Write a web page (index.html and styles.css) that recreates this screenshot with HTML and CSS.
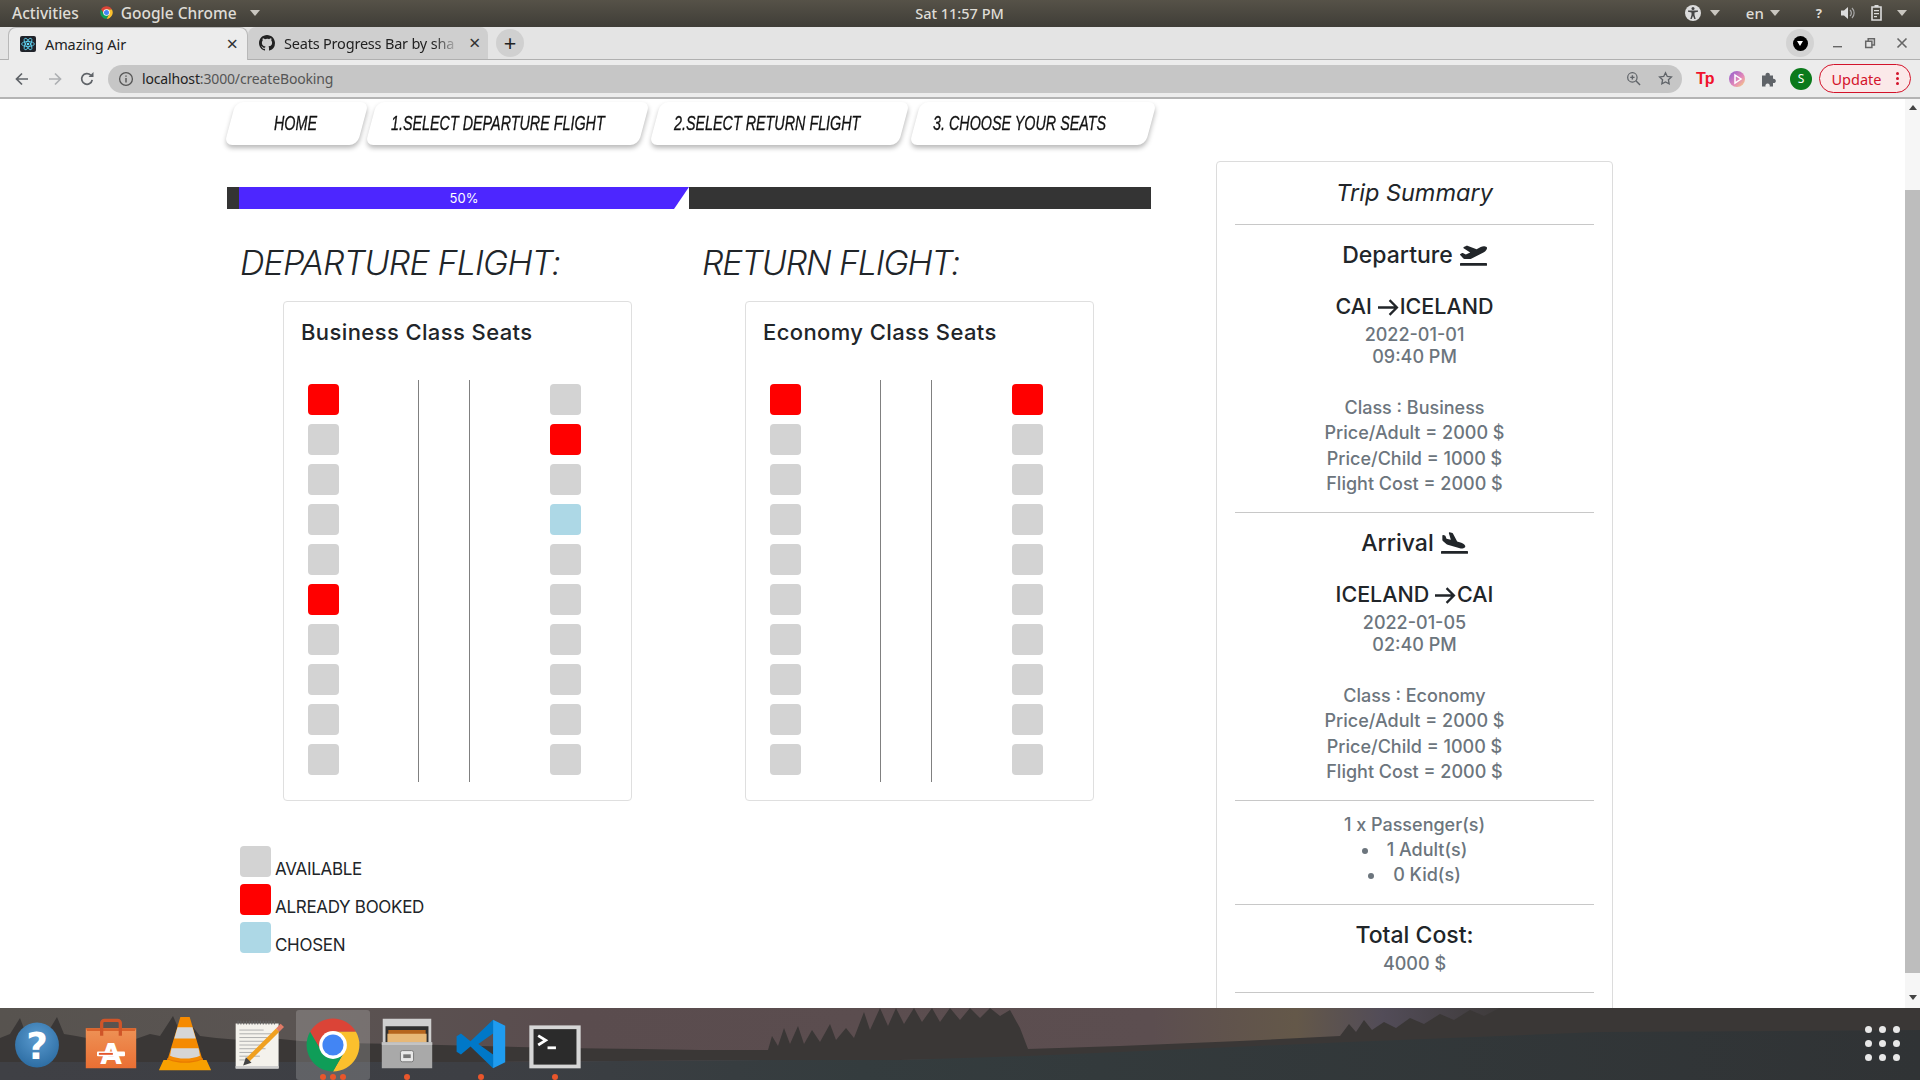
FILE: index.html
```html
<!DOCTYPE html>
<html lang="en">
<head>
<meta charset="utf-8">
<title>Amazing Air</title>
<link rel="stylesheet" href="styles.css">
</head>
<body>
<svg class="defs" width="0" height="0">
  <symbol id="chrome" viewBox="0 0 48 48">
    <path fill="#db4437" d="M6.68 14A20 20 0 0 1 41.32 14H24L15.34 29Z"/>
    <path fill="#fbc02d" d="M41.32 14A20 20 0 0 1 24 44L32.66 29 24 14Z"/>
    <path fill="#0f9d58" d="M24 44A20 20 0 0 1 6.68 14L15.34 29H32.66Z"/>
    <circle cx="24" cy="24" r="10.5" fill="#fff"/>
    <circle cx="24" cy="24" r="8" fill="#4285f4"/>
  </symbol>
  <symbol id="caret" viewBox="0 0 10 6"><path fill="currentColor" d="M0 0H10L5 6Z"/></symbol>
  <symbol id="takeoff" viewBox="0 0 640 512"><path fill="#212529" d="M624 448H16c-8.84 0-16 7.16-16 16v32c0 8.84 7.16 16 16 16h608c8.84 0 16-7.16 16-16v-32c0-8.84-7.16-16-16-16zM80.55 341.27c6.28 6.84 15.1 10.72 24.33 10.71l130.54-.18a65.62 65.62 0 0 0 29.64-7.12l290.96-147.65c26.74-13.57 50.71-32.94 67.02-58.31 18.31-28.48 20.3-49.09 13.07-63.65-7.21-14.57-24.74-25.27-58.25-27.45-29.85-1.94-59.54 5.92-86.28 19.48l-98.51 49.99-218.7-82.06a17.799 17.799 0 0 0-18-1.11L90.62 67.29c-10.67 5.41-13.25 19.65-5.17 28.53l156.22 98.1-103.21 52.38-72.35-36.47a17.804 17.804 0 0 0-16.07.02L9.91 230.22c-10.44 5.3-13.19 19.12-5.57 28.08l76.21 82.97z"/></symbol>
  <symbol id="landing" viewBox="0 0 640 512"><path fill="#212529" d="M624 448H16c-8.84 0-16 7.16-16 16v32c0 8.84 7.16 16 16 16h608c8.84 0 16-7.16 16-16v-32c0-8.84-7.16-16-16-16zM44.81 205.66l88.74 80a62.607 62.607 0 0 0 25.47 13.93l287.6 78.35c26.48 7.21 54.56 8.72 81 1.36 29.67-8.27 43.44-21.21 47.25-35.71 3.83-14.5-1.73-32.71-23.37-54.96-19.28-19.82-44.35-32.79-70.83-40l-97.51-26.56L282.8 30.22c-1.51-5.81-5.95-10.35-11.66-11.91L206.05.58c-10.56-2.88-20.9 5.32-20.71 16.44l47.92 164.21-102.2-27.84-27.59-67.88c-1.93-4.89-6.01-8.57-11.02-9.93L52.72 64.75c-10.34-2.82-20.53 5-20.72 15.88l.23 101.78c.19 8.91 6.03 17.34 12.58 23.25z"/></symbol>
</svg>

<header class="topbar">
  <div class="top-left">
    <span>Activities</span>
    <span class="top-app"><svg class="i15"><use href="#chrome"/></svg>Google Chrome<svg class="caret"><use href="#caret"/></svg></span>
  </div>
  <div class="clock">Sat 11:57 PM</div>
  <div class="top-right">
    <span class="tr-a11y">
      <svg class="i16" viewBox="0 0 16 16"><circle cx="8" cy="8" r="8" fill="#dcdcdc"/><circle cx="8" cy="3.6" r="1.5" fill="#444"/><path fill="#444" d="M3 5.4h10v1.3l-3.5.8v2.6l1.2 4h-1.4L8 10.8l-1.3 3.3H5.3l1.2-4V7.5L3 6.7Z"/></svg>
      <svg class="caret"><use href="#caret"/></svg>
    </span>
    <span class="tr-lang">en<svg class="caret"><use href="#caret"/></svg></span>
    <span class="tr-help">?</span>
    <svg class="i16 tr-sound" viewBox="0 0 16 16"><path fill="#dcdcdc" d="M1 5.5h3L8 2v12L4 10.5H1Z"/><path fill="none" stroke="#aaa" stroke-width="1.2" d="M10 5a4 4 0 0 1 0 6M12 3a7 7 0 0 1 0 10"/></svg>
    <svg class="i16 tr-batt" viewBox="0 0 16 18"><path fill="none" stroke="#dcdcdc" stroke-width="1.6" d="M3 3h9v13H3Z"/><path fill="#dcdcdc" d="M5.5 1h4v2h-4ZM5 6h5v1.3H5ZM5 9h5v1.3H5ZM5 12h3v1.3H5Z"/></svg>
    <svg class="caret tr-last"><use href="#caret"/></svg>
  </div>
</header>

<div class="tabstrip">
  <div class="tab tab-active">
    <svg class="favicon" viewBox="0 0 16 16"><rect width="16" height="16" rx="2" fill="#20232a"/><g fill="none" stroke="#61dafb" stroke-width=".8"><ellipse cx="8" cy="8" rx="6.4" ry="2.5"/><ellipse cx="8" cy="8" rx="6.4" ry="2.5" transform="rotate(60 8 8)"/><ellipse cx="8" cy="8" rx="6.4" ry="2.5" transform="rotate(120 8 8)"/></g><circle cx="8" cy="8" r="1.3" fill="#61dafb"/></svg>
    <span class="tab-title">Amazing Air</span>
    <span class="tab-x">×</span>
  </div>
  <div class="tab tab-idle">
    <svg class="favicon" viewBox="0 0 16 16"><path fill="#222" d="M8 0C3.58 0 0 3.58 0 8c0 3.54 2.29 6.53 5.47 7.59.4.07.55-.17.55-.38v-1.34c-2.23.48-2.7-1.07-2.7-1.07-.36-.92-.89-1.17-.89-1.17-.73-.5.05-.49.05-.49.8.06 1.23.83 1.23.83.71 1.22 1.87.87 2.33.66.07-.52.28-.87.5-1.07-1.78-.2-3.64-.89-3.64-3.95 0-.87.31-1.59.82-2.15-.08-.2-.36-1.02.08-2.12 0 0 .67-.21 2.2.82A7.6 7.6 0 0 1 8 3.87c.68 0 1.36.09 2 .27 1.53-1.04 2.2-.82 2.2-.82.44 1.1.16 1.92.08 2.12.51.56.82 1.27.82 2.15 0 3.07-1.87 3.75-3.65 3.95.29.25.54.73.54 1.48v2.2c0 .21.15.46.55.38A8 8 0 0 0 16 8c0-4.42-3.58-8-8-8Z"/></svg>
    <span class="tab-title tab-fade">Seats Progress Bar by sha</span>
    <span class="tab-x">×</span>
  </div>
  <div class="newtab">+</div>
  <div class="strip-right">
    <span class="profile-pill"><span class="profile-dot"></span></span>
    <svg class="win" viewBox="0 0 12 12"><path fill="#666" d="M1 9h9v1.4H1Z"/></svg>
    <svg class="win" viewBox="0 0 12 12"><path fill="none" stroke="#666" stroke-width="1.5" d="M1.7 4.2h6.2v6.2H1.7ZM4.2 4V1.7h6.2v6.2H8"/></svg>
    <svg class="win" viewBox="0 0 12 12"><path fill="none" stroke="#666" stroke-width="1.6" d="M1.5 1.5l9 9M10.5 1.5l-9 9"/></svg>
  </div>
</div>

<div class="toolbar">
  <svg class="nav-ic" viewBox="0 0 16 16"><path fill="none" stroke="#5f6368" stroke-width="1.7" d="M14 8H2.5M8 2.5 2.5 8 8 13.5"/></svg>
  <svg class="nav-ic" viewBox="0 0 16 16"><path fill="none" stroke="#aeb0b3" stroke-width="1.7" d="M2 8h11.5M8 2.5 13.5 8 8 13.5"/></svg>
  <svg class="nav-ic" viewBox="0 0 16 16"><path fill="none" stroke="#5f6368" stroke-width="1.7" d="M13.2 8.8A5.3 5.3 0 1 1 11.7 4.2"/><path fill="#5f6368" d="M9.5 6H14.5V1Z"/></svg>
  <div class="omnibox">
    <svg class="info" viewBox="0 0 16 16"><circle cx="8" cy="8" r="6.4" fill="none" stroke="#555" stroke-width="1.3"/><path fill="#555" d="M7.3 7h1.4v4.4H7.3ZM7.3 4.4h1.4v1.4H7.3Z"/></svg>
    <span class="url"><b>localhost</b>:3000/createBooking</span>
    <svg class="omni-ic omni-zoom" viewBox="0 0 16 16"><circle cx="6.8" cy="6.8" r="5" fill="none" stroke="#5f6368" stroke-width="1.3"/><path stroke="#5f6368" stroke-width="1.5" d="M10.5 10.5 15 15M4.5 6.8h4.6M6.8 4.5v4.6"/></svg>
    <svg class="omni-ic" viewBox="0 0 16 16"><path fill="none" stroke="#5f6368" stroke-width="1.4" d="M8 1.8l1.9 4 4.4.5-3.2 3 .8 4.4L8 11.6l-3.9 2.1.8-4.4-3.2-3 4.4-.5Z"/></svg>
  </div>
  <div class="ext-row">
    <span class="ext-tp">Tp</span>
    <svg class="ext" viewBox="0 0 16 16"><defs><linearGradient id="pg" x1="0" y1="0" x2="1" y2="1"><stop offset="0" stop-color="#8e5bd0"/><stop offset=".6" stop-color="#e58ab8"/><stop offset="1" stop-color="#f6d77c"/></linearGradient></defs><circle cx="8" cy="8" r="8" fill="url(#pg)"/><path fill="none" stroke="#fff" stroke-width="1.5" d="M6 4l6 4-6 4Z"/></svg>
    <svg class="ext" viewBox="0 0 16 16"><path fill="#5f6368" d="M1 4.500h3.600a2.200 2.200 0 1 1 4.200 0H12v3.300a2.200 2.200 0 1 1 0 4.200V15.500H8.600a2.200 2.200 0 1 0-4 0H1Z"/></svg>
    <span class="avatar">S</span>
    <span class="update">Update<span class="update-dots"><i></i><i></i><i></i></span></span>
  </div>
</div>

<div class="viewport">
  <div class="page">
    <main class="main">
      <nav class="steps">
        <a class="step step-home"><span>HOME</span></a>
        <a class="step step-dep"><span>1.SELECT DEPARTURE FLIGHT</span></a>
        <a class="step step-ret"><span>2.SELECT RETURN FLIGHT</span></a>
        <a class="step step-seat"><span>3. CHOOSE YOUR SEATS</span></a>
      </nav>
      <div class="progress"><div class="progress-fill">50%</div></div>

      <div class="flights">
        <section class="flight">
          <h2>DEPARTURE FLIGHT:</h2>
          <div class="card">
            <h3>Business Class Seats</h3>
            <div class="cabin">
              <div class="col">
                <i class="seat booked"></i><i class="seat"></i><i class="seat"></i><i class="seat"></i><i class="seat"></i>
                <i class="seat booked"></i><i class="seat"></i><i class="seat"></i><i class="seat"></i><i class="seat"></i>
              </div>
              <div class="aisle"></div>
              <div class="col">
                <i class="seat"></i><i class="seat booked"></i><i class="seat"></i><i class="seat chosen"></i><i class="seat"></i>
                <i class="seat"></i><i class="seat"></i><i class="seat"></i><i class="seat"></i><i class="seat"></i>
              </div>
            </div>
          </div>
        </section>
        <section class="flight">
          <h2 class="h2-return">RETURN FLIGHT:</h2>
          <div class="card">
            <h3>Economy Class Seats</h3>
            <div class="cabin">
              <div class="col">
                <i class="seat booked"></i><i class="seat"></i><i class="seat"></i><i class="seat"></i><i class="seat"></i>
                <i class="seat"></i><i class="seat"></i><i class="seat"></i><i class="seat"></i><i class="seat"></i>
              </div>
              <div class="aisle"></div>
              <div class="col">
                <i class="seat booked"></i><i class="seat"></i><i class="seat"></i><i class="seat"></i><i class="seat"></i>
                <i class="seat"></i><i class="seat"></i><i class="seat"></i><i class="seat"></i><i class="seat"></i>
              </div>
            </div>
          </div>
        </section>
      </div>

      <ul class="legend">
        <li><i class="seat"></i><span>AVAILABLE</span></li>
        <li><i class="seat booked"></i><span>ALREADY BOOKED</span></li>
        <li><i class="seat chosen"></i><span>CHOSEN</span></li>
      </ul>
    </main>

    <aside class="summary">
      <div class="sum-head">Trip Summary</div>
      <section class="sum-sec">
        <h4>Departure <svg class="plane"><use href="#takeoff"/></svg></h4>
        <div class="route">CAI <span class="arrow"><svg viewBox="0 0 20 16"><path fill="none" stroke="#212529" stroke-width="2.200" d="M0 8h18M11 1l7 7-7 7"/></svg></span>ICELAND</div>
        <div class="when">2022-01-01<br>09:40 PM</div>
        <div class="fare">Class : Business<br>Price/Adult = 2000 $<br>Price/Child = 1000 $<br>Flight Cost = 2000 $</div>
      </section>
      <section class="sum-sec">
        <h4>Arrival <svg class="plane"><use href="#landing"/></svg></h4>
        <div class="route">ICELAND <span class="arrow"><svg viewBox="0 0 20 16"><path fill="none" stroke="#212529" stroke-width="2.200" d="M0 8h18M11 1l7 7-7 7"/></svg></span>CAI</div>
        <div class="when">2022-01-05<br>02:40 PM</div>
        <div class="fare">Class : Economy<br>Price/Adult = 2000 $<br>Price/Child = 1000 $<br>Flight Cost = 2000 $</div>
      </section>
      <section class="sum-pax">
        <div>1 x Passenger(s)</div>
        <ul>
          <li>1 Adult(s)</li>
          <li>0 Kid(s)</li>
        </ul>
      </section>
      <section class="sum-total">
        <h5>Total Cost:</h5>
        <div>4000 $</div>
      </section>
    </aside>
  </div>
  <div class="scrollbar">
    <span class="sb-up"></span>
    <span class="sb-thumb"></span>
    <span class="sb-down"></span>
  </div>
</div>

<footer class="dock">
  <svg class="wallpaper" viewBox="0 0 1920 72" preserveAspectRatio="none">
    <defs>
      <linearGradient id="sky" x1="0" x2="1" y1="0" y2="0"><stop offset="0" stop-color="#57534f"/><stop offset=".15" stop-color="#5a5452"/><stop offset=".3" stop-color="#5a4c4e"/><stop offset=".6" stop-color="#5c4e50"/><stop offset=".675" stop-color="#645849"/><stop offset=".72" stop-color="#524c58"/><stop offset=".79" stop-color="#3b3836"/><stop offset="1" stop-color="#33322f"/></linearGradient>
      <linearGradient id="ground" x1="0" x2="1" y1="0" y2="0"><stop offset="0" stop-color="#3f4045"/><stop offset=".25" stop-color="#3d3f44"/><stop offset=".45" stop-color="#343c3e"/><stop offset="1" stop-color="#303335"/></linearGradient>
    </defs>
    <rect width="1920" height="72" fill="url(#sky)"/>
    <path fill="#3a3736" d="M0 54V30L10 26 20 10 26 26 38 22 48 24 57 9 64 26 76 28 92 31 110 30 130 33 150 26 160 28 173 8 180 24 192 18 200 28 216 30 240 32 270 30 300 33 340 35 400 36 480 38 560 40 640 41 700 42 768 42 772 28 778 38 784 20 790 36 798 18 804 36 812 22 820 34 830 16 836 32 846 20 854 30 864 4 870 22 880 0 888 18 896 0 904 16 914 0 922 14 932 0 940 14 950 0 960 12 970 0 980 10 990 0 1000 8 1010 2 1020 20 1028 41 1120 38 1240 33 1340 28 1349 16 1356 24 1364 12 1372 22 1384 14 1396 20 1410 10 1424 16 1440 6 1454 12 1470 2 1484 8 1500 0 1920 0V24H1600L1348 36 1028 50 900 52 768 52 480 54Z"/>
    <path fill="url(#ground)" d="M0 54 480 54 768 52 900 52 1028 48 1348 34 1600 24 1920 22V72H0Z"/>
  </svg>
  <div class="dock-item">
    <svg class="app" viewBox="0 0 60 60"><defs><radialGradient id="hb" cx=".5" cy=".35" r=".7"><stop offset="0" stop-color="#5a9bd0"/><stop offset="1" stop-color="#2a6aa0"/></radialGradient></defs><ellipse cx="30" cy="30" rx="23.500" ry="24" fill="url(#hb)"/><text class="help-q" x="30" y="45" text-anchor="middle">?</text></svg>
  </div>
  <div class="dock-item">
    <svg class="app" viewBox="0 0 60 60"><defs><linearGradient id="bagg" x1="0" y1="0" x2="0" y2="1"><stop offset="0" stop-color="#ee9256"/><stop offset="1" stop-color="#ea6f33"/></linearGradient></defs><path fill="url(#bagg)" d="M3 12h54v43H3Z"/><path fill="#d9622b" d="M3 12h54l-1.500 3h-51Z"/><path fill="none" stroke="#cf5529" stroke-width="3.500" d="M20 20V6.500a3 3 0 0 1 3-3h14a3 3 0 0 1 3 3V20"/><text class="bag-a" x="30" y="50" text-anchor="middle">A</text><rect x="15" y="37" width="30" height="5" rx="1" fill="#fff"/><rect x="17" y="38.500" width="15" height="2" fill="#e3552c"/></svg>
  </div>
  <div class="dock-item">
    <svg class="app" viewBox="0 0 60 60"><path fill="#f58a00" d="M25 0h10l15 50H10Z"/><path fill="#d6d6d6" d="M22 11h16l3.500 12h-23ZM15.500 33.500h29l1.500 8c-8 4-24 4-32 0Z"/><path fill="#e87a00" d="M11 44c8 5 30 5 38 0l1 6H10Z"/><path fill="#f7a000" d="M7 46h6c8 4 26 4 34 0h6l5 11H2Z"/></svg>
  </div>
  <div class="dock-item">
    <svg class="app" viewBox="0 0 60 60"><path fill="#f4f2ec" d="M5 7h46v48H5Z"/><path stroke="#666" stroke-width="4" stroke-dasharray="1.200 1.800" d="M7 6h42" /><path stroke="#aaa" stroke-width="1" d="M9 14h26M9 18h34M9 22h30M9 26h32M9 30h22M9 34h28M9 38h18M9 42h22M9 46h12"/><path stroke="#cfcfcf" stroke-width="3" d="M5 54h46"/><path stroke="#f0a020" stroke-width="5" d="M18 46 50 14"/><path stroke="#e07a66" stroke-width="5" d="M50 14l5-5"/><path fill="#444" d="M13 52l3-9 6 6Z"/></svg>
  </div>
  <div class="dock-item dock-active">
    <svg class="app" viewBox="0 0 60 60"><use href="#chrome" x="-4" y="-4" width="68" height="68"/></svg>
    <span class="dots"><i></i><i></i><i></i></span>
  </div>
  <div class="dock-item">
    <svg class="app" viewBox="0 0 60 60"><path fill="#cfcfcf" d="M4 2h52v26H4Z"/><path fill="#2f2f2f" d="M7 10h46v20H7Z"/><path fill="#b5651d" d="M10 14h40v5H10Z"/><path fill="#e7b877" d="M9 18h42v12H9Z"/><path fill="#a9a9a9" d="M3 27h54v28H3Z"/><path fill="#c4c4c4" d="M3 27h54v3H3Z"/><rect x="23" y="36" width="14" height="12" rx="2" fill="#e8e8e8" stroke="#777"/><rect x="26" y="40" width="8" height="4" fill="#777"/></svg>
    <span class="dots"><i></i></span>
  </div>
  <div class="dock-item">
    <svg class="app" viewBox="0 0 60 60"><g transform="translate(2 1) scale(.93)"><path fill="#1f9cf0" d="M44 2 58 9V51L44 58Z"/><path fill="#0078c8" d="M44 2 18 27 7 18 2 21V39L7 42 18 33 44 58V42L27 30 44 18Z"/></g></svg>
    <span class="dots"><i></i></span>
  </div>
  <div class="dock-item">
    <svg class="app" viewBox="0 0 60 60"><rect x="2.500" y="9" width="55" height="46" fill="#d6d6d6"/><rect x="7" y="13" width="46" height="38" fill="#2b2b2b"/><path fill="none" stroke="#fff" stroke-width="3" d="M12 20l8 5-8 5"/><path stroke="#fff" stroke-width="3" d="M22 33h9"/></svg>
    <span class="dots"><i></i></span>
  </div>
  <div class="apps-grid"><i></i><i></i><i></i><i></i><i></i><i></i><i></i><i></i><i></i></div>
</footer>
</body>
</html>
```

FILE: styles.css
```css
* { box-sizing: border-box; }
html, body { margin: 0; height: 100%; overflow: hidden; }
body {
  width: 1920px; height: 1080px;
  display: flex; flex-direction: column;
  font-family: "Inter", "Noto Sans", sans-serif;
  color: #212529; background: #fff;
}
.defs { position: absolute; }
i { display: block; font-style: normal; }

/* system bar */
.topbar {
  height: 27px; flex: none;
  display: grid; grid-template-columns: 1fr auto 1fr; align-items: center;
  background: linear-gradient(#565248, #3f3d37);
  color: #dfdcd6; font: 500 15.5px/20px "Noto Sans", sans-serif;
  padding: 0 13px 2px 12px;
}
.top-left { display: flex; align-items: center; gap: 20px; }
.top-app { display: flex; align-items: center; gap: 7px; }
.i15 { width: 15px; height: 15px; }
.i16 { width: 16px; height: 16px; }
.caret { width: 10px; height: 6px; color: #c9c6c0; margin-left: 6px; }
.clock { font-size: 14.5px; }
.top-right { display: flex; align-items: center; justify-content: flex-end; }
.top-right span { display: flex; align-items: center; }
.tr-a11y { margin-right: 26px; }
.tr-a11y .caret { margin-left: 9px; }
.tr-lang { margin-right: 36px; font-size: 15px; }
.tr-help { margin-right: 18px; font-size: 13px; font-weight: 700; }
.tr-sound { margin-right: 13px; }
.tr-batt { height: 18px; }
.tr-last { margin-left: 12px; }

/* tab strip */
.tabstrip {
  height: 33px; flex: none; display: flex; align-items: stretch;
  background: #e4e4e4; padding-left: 8px;
  border-bottom: 1px solid #b0b0b0;
  font: 14.5px "Noto Sans", sans-serif; color: #222;
}
.tab { width: 240px; display: flex; align-items: center; padding: 0 9px 0 11px; gap: 9px; border-radius: 8px 8px 0 0; }
.tab-active { background: #ececec; height: 33px; border: 1px solid #b8b8b8; border-bottom: 0; }
.tab-idle { background: #cfcfcf; padding-left: 11px; }
.favicon { width: 16px; height: 16px; flex: none; }
.tab-title { flex: 1; white-space: nowrap; overflow: hidden; letter-spacing: -.1px; }
.tab-fade { flex: none; width: 176px; letter-spacing: -.2px; -webkit-mask-image: linear-gradient(90deg, #000 85%, transparent); mask-image: linear-gradient(90deg, #000 85%, transparent); }
.tab-idle .tab-x { margin-left: auto; }
.tab-x { font-size: 20px; line-height: 1; color: #333; }
.newtab { width: 28px; height: 28px; margin: 2px 0 0 8px; border-radius: 50%; background: #d0d0d0; font-size: 22px; line-height: 26px; text-align: center; }
.strip-right { margin-left: auto; display: flex; align-items: center; padding-right: 12px; }
.profile-pill { width: 28px; height: 28px; border-radius: 50%; background: #d3d3d3; display: flex; align-items: center; justify-content: center; margin-right: 18px; }
.profile-dot { width: 15px; height: 15px; border-radius: 50%; background: #000; position: relative; }
.profile-dot::after { content: ""; position: absolute; left: 4px; top: 5px; border: 3.5px solid transparent; border-top: 5px solid #fff; }
.win { width: 12px; height: 12px; margin-left: 20px; }
.win:first-of-type { margin-left: 0; }

/* toolbar */
.toolbar {
  height: 39px; flex: none; display: flex; align-items: center;
  background: #ececec; border-bottom: 2px solid #b4b4b4;
  padding: 0 9px 0 14px;
}
.nav-ic { width: 16px; height: 16px; margin-right: 16.5px; }
.omnibox {
  width: 1574px; height: 28px; margin-left: -3.5px; border-radius: 14px; background: #c6c6c6;
  display: flex; align-items: center; padding: 0 9px 0 10px;
  font: 14px "Noto Sans", sans-serif; color: #555;
}
.omnibox b { font-weight: 400; color: #222; }
.info { width: 16px; height: 16px; margin-right: 8px; }
.url { flex: 1; letter-spacing: -.15px; }
.omni-ic { width: 15px; height: 15px; margin-left: 17px; }
.ext-row { display: flex; align-items: center; margin-left: 14px; }
.ext-tp { width: 18px; color: #f0122d; font: 900 16px/1 "Liberation Sans", sans-serif; letter-spacing: -1px; margin-right: 15px; }
.ext { width: 16px; height: 16px; margin-right: 16px; }
.avatar { width: 22px; height: 22px; margin-left: -3px; border-radius: 50%; background: #0b7a1b; color: #fff; font: 12px/22px "Noto Sans", sans-serif; text-align: center; }
.update {
  width: 92px; height: 29px; margin-left: 6.5px; border: 1px solid #d3132a; border-radius: 15px; background: #fbe9e9;
  color: #d3132a; font: 14.5px "Noto Sans", sans-serif;
  display: flex; align-items: center; padding-left: 12px; gap: 15px;
}
.update-dots { display: flex; flex-direction: column; gap: 2px; }
.update-dots i { width: 3px; height: 3px; border-radius: 50%; background: #d3132a; }

/* viewport */
.viewport { flex: 1; min-height: 0; display: flex; overflow: hidden; }
.page { flex: 1; min-width: 0; display: flex; padding-left: 227px; overflow: hidden; }
.main { width: 924px; flex: none; }

.steps { display: flex; margin: 3px 0 0 3px; height: 43px; }
.step {
  position: relative; height: 43px; display: flex; align-items: center; margin-right: 11px;
  font: italic 400 19.5px/1 "Liberation Sans", sans-serif;
  color: #111;
  -webkit-text-stroke: .3px #111;
}
.step::before {
  content: ""; position: absolute; inset: 0;
  background: #fff; border-radius: 8px;
  transform: skewX(-15deg);
  box-shadow: 1px 3px 5px rgba(0,0,0,.28);
}
.step span { position: relative; white-space: nowrap; transform: scaleX(.735); transform-origin: left center; }
.step-home { width: 136px; padding-left: 44px; margin-right: 8px; }
.step-dep { width: 273px; padding-left: 20px; }
.step-ret { width: 249px; padding-left: 19px; }
.step-seat { width: 236px; padding-left: 18px; margin-right: 0; }

.progress { margin-top: 42px; height: 22px; background: #343434; padding-left: 12px; }
.progress-fill {
  position: relative; width: 450px; height: 22px; background: #4d26ff;
  color: #fff; font-size: 13px; line-height: 22px; text-align: center;
}
.progress-fill::after {
  content: ""; position: absolute; right: 0; top: 0;
  border-style: solid; border-width: 0 0 22px 15px;
  border-color: transparent transparent #fff transparent;
}

.flights { display: flex; }
.flight { width: 462px; padding-left: 13px; }
.flight h2 {
  margin: 26px 0 12px; font-size: 34px; line-height: 55px; font-weight: 300; font-style: italic;
  white-space: nowrap; color: #212529; letter-spacing: -.85px;
}
.flight h2.h2-return { letter-spacing: -1.2px; }
.card {
  width: 349px; height: 500px; margin-top: -1px; margin-left: 43px;
  border: 1px solid #dfdfdf; border-radius: 4px;
  padding: 15px 17px 0;
}
.card h3 { margin: 0; font-size: 22px; line-height: 30px; font-weight: 500; letter-spacing: .4px; }
.cabin { display: grid; grid-template-columns: 31px 211px 31px; margin: 33px 0 0 7px; width: 273px; height: 402px; }
.col { display: flex; flex-direction: column; gap: 9px; padding-top: 4px; }
.aisle { width: 52px; margin-left: 79px; border-left: 1px solid #808080; border-right: 1px solid #808080; }
.seat { width: 31px; height: 31px; border-radius: 4px; background: #d3d3d3; flex: none; }
.booked { background: #f00; }
.chosen { background: #add8e6; }

.legend { list-style: none; margin: 45px 0 0 13px; padding: 0; }
.legend li { display: flex; align-items: flex-end; gap: 4px; height: 31px; margin-bottom: 7px; font-size: 17px; line-height: 22px; letter-spacing: -.3px; }
.legend span { transform: translateY(3px); }

/* summary */
.summary {
  width: 397px; flex: none; margin: 62px 0 -200px 65px; height: 1100px;
  border: 1px solid #dcdcdc; border-radius: 4px; padding: 0 18px;
  text-align: center; color: #6c757d;
}
.sum-head { height: 63px; font-size: 23.5px; line-height: 62px; font-style: italic; color: #212529; border-bottom: 1px solid #c8c8c8; }
.sum-sec { height: 288px; padding-top: 13px; border-bottom: 1px solid #c8c8c8; }
.sum-sec h4 { margin: 0; display: flex; justify-content: center; align-items: center; gap: 7px; font-size: 23px; line-height: 34px; font-weight: 500; color: #212529; }
.plane { width: 27px; height: 22px; }
.route { margin-top: 19px; font-size: 21.5px; line-height: 31px; font-weight: 500; color: #212529; }
.arrow { display: inline-block; width: 22px; }
.arrow svg { width: 21px; height: 17px; display: block; transform: translateY(2px); }
.when { margin-top: 2px; font-size: 18px; line-height: 22px; font-weight: 500; }
.fare { margin-top: 27px; font-size: 18px; line-height: 25.300px; font-weight: 500; }
.sum-pax { height: 104px; padding-top: 11px; border-bottom: 1px solid #c8c8c8; font-size: 18px; line-height: 25px; font-weight: 500; }
.sum-pax ul { margin: 0; padding: 0; list-style-position: inside; }
.sum-total { height: 88px; padding-top: 14px; border-bottom: 1px solid #c8c8c8; font-size: 18px; line-height: 25px; font-weight: 500; }
.sum-total h5 { margin: 0; font-size: 23px; line-height: 32px; font-weight: 500; color: #212529; }

.scrollbar { width: 15px; flex: none; background: #f6f6f6; display: flex; flex-direction: column; align-items: center; }
.sb-up { margin-top: 6px; border: 4px solid transparent; border-top: 0; border-bottom: 5px solid #444; }
.sb-thumb { width: 15px; height: 783px; margin-top: 80px; background: #bdbdbd; }
.sb-down { margin-top: 22px; border: 4px solid transparent; border-bottom: 0; border-top: 5px solid #444; }

/* dock */
.dock { position: relative; height: 72px; flex: none; display: flex; align-items: center; overflow: hidden; background: #2f3235; }
.wallpaper { position: absolute; inset: 0; width: 100%; height: 100%; }
.dock-item { position: relative; width: 74px; height: 70px; margin-top: 2px; display: flex; align-items: center; justify-content: center; }
.dock-active { background: rgba(255,255,255,.18); border-radius: 3px; }
.app { width: 56px; height: 56px; }
.dots { position: absolute; left: 0; right: 0; bottom: 0; display: flex; justify-content: center; gap: 4px; }
.dots i { width: 6px; height: 6px; border-radius: 50%; background: #e9562b; }
.help-q { font: 700 40px "DejaVu Sans", sans-serif; fill: #fff; }
.bag-a { font: 700 30px "DejaVu Sans", sans-serif; fill: #fff; }
.apps-grid { position: absolute; left: 1865px; top: 18px; display: grid; grid-template-columns: repeat(3, 7px); gap: 7px; }
.apps-grid i { width: 7px; height: 7px; border-radius: 50%; background: #e8e8e8; }
```
